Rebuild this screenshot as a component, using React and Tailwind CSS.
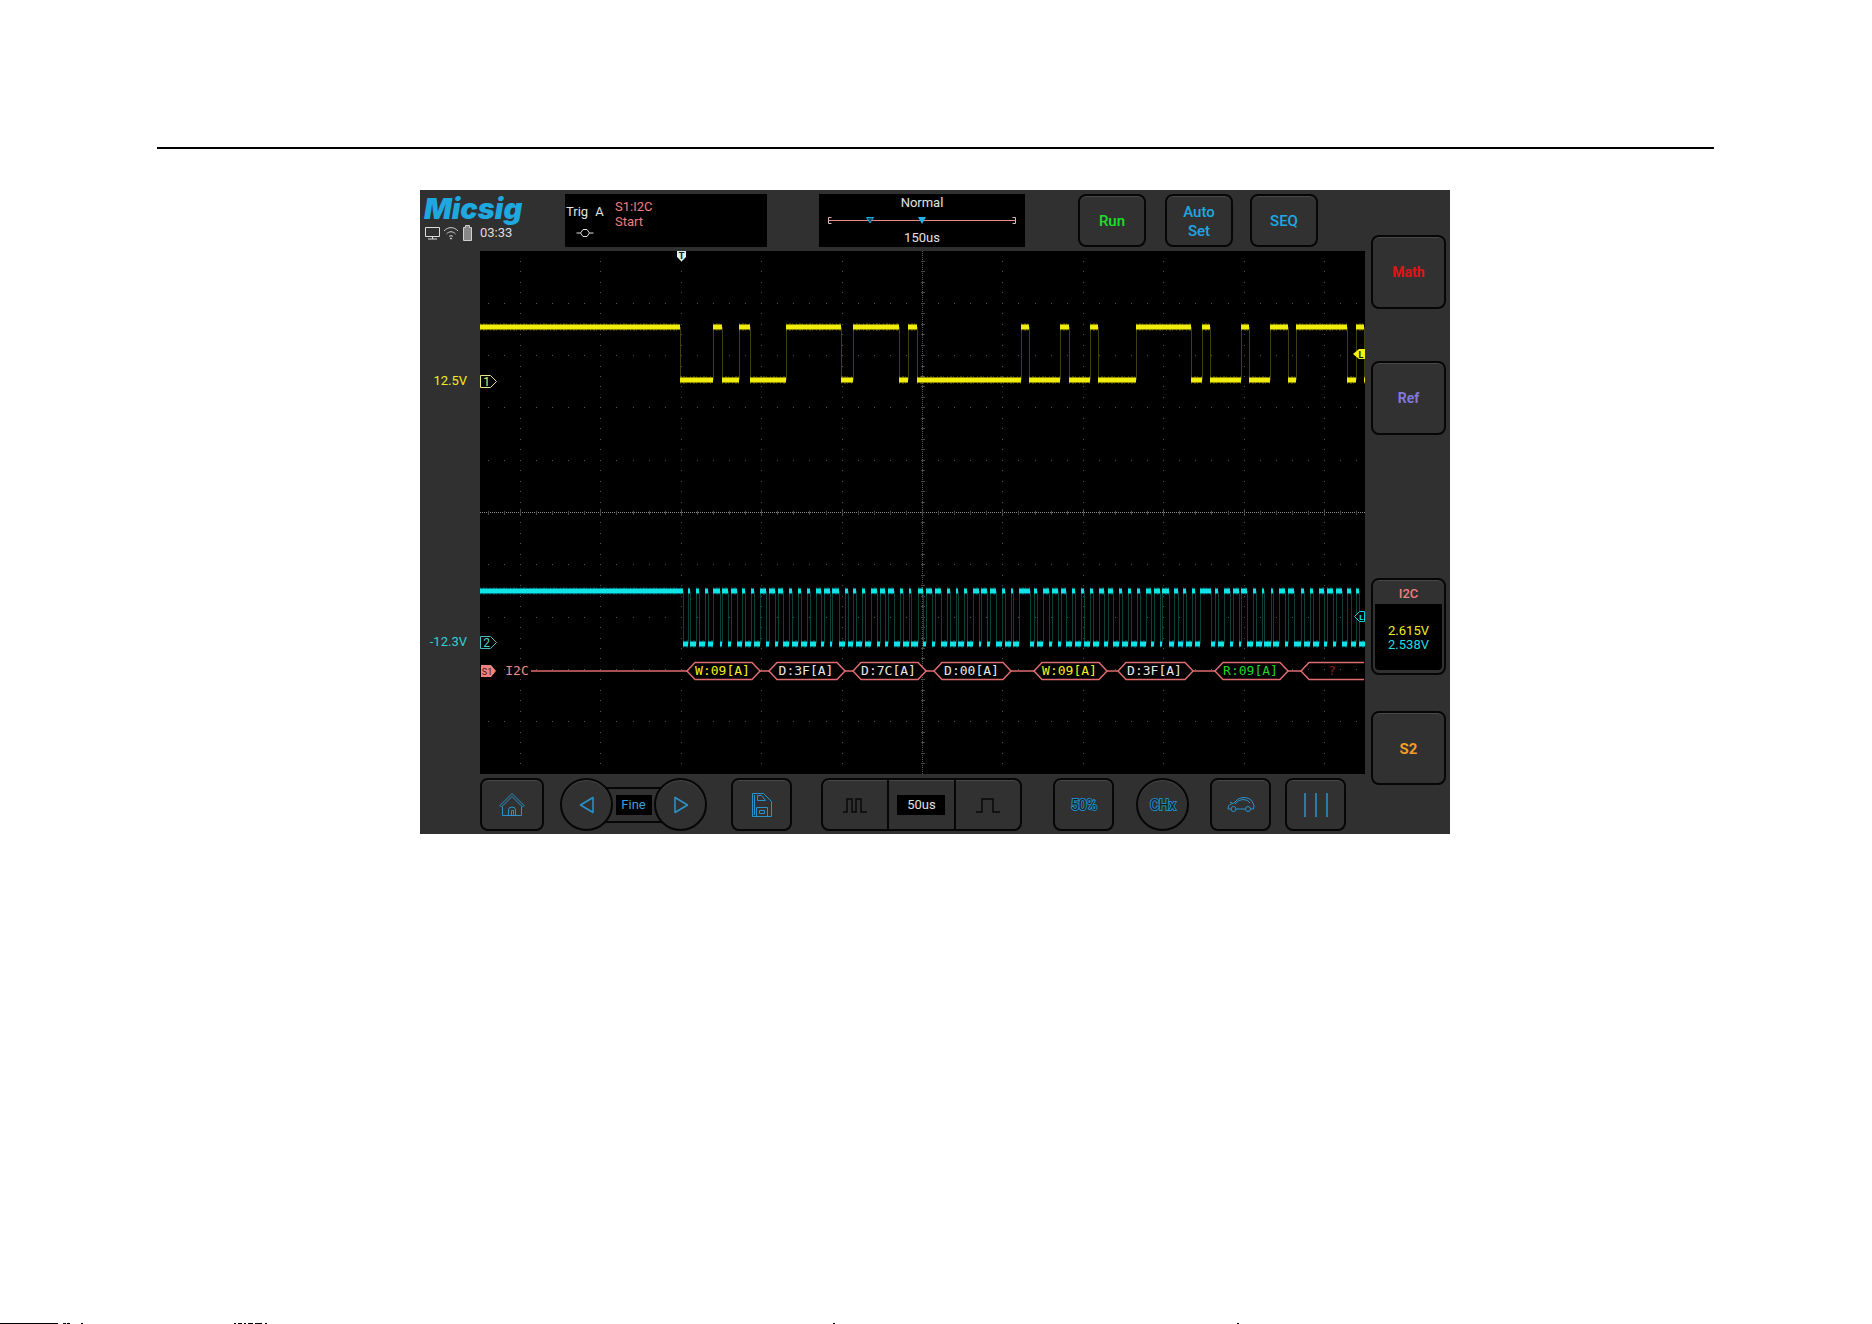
import React from "react";

const CH1_EDGES = [
  200, 233, 242, 259, 270, 306, 361, 373, 419, 428, 437, 541, 549, 580, 589,
  610, 618, 656, 711, 722, 730, 761, 769, 790, 808, 816, 867, 876, 884,
];

const CH2_HIGHS = [
  [208, 210], [216, 219], [225, 228], [233, 240], [242, 248], [251, 257],
  [262, 265], [271, 274], [280, 286], [289, 295], [298, 303], [309, 312],
  [318, 321], [327, 330], [336, 341], [344, 350], [352, 359], [365, 368],
  [373, 376], [382, 385], [391, 397], [400, 405], [408, 414], [420, 423],
  [429, 431], [438, 443], [446, 452], [455, 461], [467, 470], [476, 478],
  [484, 487], [493, 499], [501, 507], [510, 516], [522, 525], [531, 533],
  [539, 550], [554, 557], [563, 569], [572, 578], [581, 586], [592, 595],
  [601, 604], [610, 613], [619, 624], [628, 633], [639, 642], [648, 651],
  [657, 660], [666, 671], [674, 680], [682, 689], [694, 698], [703, 706],
  [712, 715], [720, 731], [735, 738], [744, 750], [753, 759], [761, 767],
  [773, 776], [782, 784], [791, 793], [799, 805], [808, 814], [821, 824],
  [830, 833], [839, 844], [847, 853], [856, 862], [867, 871], [876, 879],
];
const CH2_EDGES = [203, ...CH2_HIGHS.flat()];

const FRAMES = [
  { x1: 207, x2: 280, text: "W:09[A]", color: "#f4f01a" },
  { x1: 289, x2: 365, text: "D:3F[A]", color: "#e8e8e8" },
  { x1: 373, x2: 446, text: "D:7C[A]", color: "#e8e8e8" },
  { x1: 454, x2: 531, text: "D:00[A]", color: "#e8e8e8" },
  { x1: 554, x2: 627, text: "W:09[A]", color: "#f4f01a" },
  { x1: 638, x2: 713, text: "D:3F[A]", color: "#e8e8e8" },
  { x1: 735, x2: 808, text: "R:09[A]", color: "#22d52a" },
];

const DIV_X = 80.4;
const DIV_Y = 52.3;
const MID_X = 442;
const MID_Y = 261;

function Graticule() {
  const dots = [];
  for (let i = -5; i <= 5; i++) {
    if (i === 0) continue;
    for (let j = -24; j <= 24; j++) {
      dots.push([Math.round(MID_X + i * DIV_X), Math.round(MID_Y + (j * DIV_Y) / 5)]);
    }
  }
  for (let j = -4; j <= 4; j++) {
    if (j === 0) continue;
    for (let i = -27; i <= 27; i++) {
      dots.push([Math.round(MID_X + (i * DIV_X) / 5), Math.round(MID_Y + j * DIV_Y)]);
    }
  }
  const ticksX = [];
  for (let i = -27; i <= 27; i++) ticksX.push(Math.round(MID_X + (i * DIV_X) / 5));
  const ticksY = [];
  for (let j = -24; j <= 24; j++) ticksY.push(Math.round(MID_Y + (j * DIV_Y) / 5));
  return (
    <g shapeRendering="crispEdges">
      {dots.map(([x, y], k) => (
        <rect key={k} x={x} y={y} width="1" height="1" fill="#525252" />
      ))}
      <path d="M0 261.5H885" stroke="#8c8c8c" strokeDasharray="1 1" />
      <path d="M442.5 0V523" stroke="#585858" strokeDasharray="1 1" />
      {ticksX.map((x, k) => (
        <rect key={k} x={x} y={k % 5 === 2 ? 258 : 260} width="1" height={k % 5 === 2 ? 7 : 4} fill="#484848" />
      ))}
      {ticksY.map((y, k) => (
        <rect key={k} x="441" y={y} width="4" height="1" fill="#484848" />
      ))}
    </g>
  );
}

function Trace({ edges, high, low, core, glow, edge }) {
  const pts = [0, ...edges, 885];
  let top = "";
  let bottom = "";
  for (let i = 0; i < pts.length - 1; i++) {
    if (i % 2 === 0) top += `M${pts[i]} ${high}H${pts[i + 1]}`;
    else bottom += `M${pts[i]} ${low}H${pts[i + 1]}`;
  }
  const sides = edges.map((x) => `M${x + 0.5} ${high}V${low}`).join("");
  const level = top + bottom;
  return (
    <g fill="none">
      <path d={sides} stroke={edge} strokeWidth="1" />
      <path d={level} stroke={glow} strokeWidth="8" strokeOpacity="0.35" strokeDasharray="1 2 2 1 1 3" />
      <path d={level} stroke={glow} strokeWidth="6" strokeOpacity="0.8" />
      <path d={level} stroke={core} strokeWidth="4" />
    </g>
  );
}

function Display() {
  return (
    <svg viewBox="0 0 885 523" className="block h-auto w-full bg-black" role="img" aria-label="Oscilloscope traces with I2C decode">
      <Graticule />
      <Trace edges={CH1_EDGES} high={76} low={129} core="#f0ec0c" glow="#a8a400" edge="#403e14" />
      <Trace edges={CH2_EDGES} high={340} low={393} core="#10e4e6" glow="#00999c" edge="#0b403c" />

      <path d="M197 0H206V6L201.5 10.5L197 6Z" fill="#d5f3f5" />
      <text x="201.5" y="8" textAnchor="middle" fontSize="9" fontWeight="700" fontFamily="Roboto, sans-serif" fill="#111">T</text>

      <path d="M0.5 124.5H10.5L16.5 130.5L10.5 136.5H0.5Z" fill="#000" stroke="#e6e48a" />
      <text x="6.5" y="135" textAnchor="middle" fontSize="12" fontFamily="Roboto, sans-serif" fill="#f0ee60">1</text>
      <path d="M0.5 385.5H10.5L16.5 391.5L10.5 397.5H0.5Z" fill="#000" stroke="#4fb9bb" />
      <text x="6.5" y="396" textAnchor="middle" fontSize="12" fontFamily="Roboto, sans-serif" fill="#4fd3d5">2</text>

      <path d="M873 103L879 98H885V108H879Z" fill="#f6f20c" />
      <text x="881" y="106.5" textAnchor="middle" fontSize="9" fontWeight="700" fontFamily="Roboto, sans-serif" fill="#111">L</text>
      <path d="M874.5 365.5L879.5 360.5H884.5V370.5H879.5Z" fill="#000" stroke="#10cfd2" />
      <text x="881.5" y="369" textAnchor="middle" fontSize="8" fontWeight="700" fontFamily="Roboto, sans-serif" fill="#10eef0">L</text>

      <path d="M1 414H11L16 420L11 426H1Z" fill="#f28080" />
      <text x="7" y="423.5" textAnchor="middle" fontSize="9" fontFamily="Roboto, sans-serif" fill="#4a1515">S1</text>
      <g fontFamily="'DejaVu Sans Mono', monospace" fontSize="13" textAnchor="middle">
        <text x="37" y="424" fill="#f08a8a">I2C</text>
        <path d="M51 420H207M280 420H289M365 420H373M446 420H454M531 420H554M627 420H638M713 420H735M808 420H821" stroke="#e06c70" strokeWidth="1.5" fill="none" />
        {FRAMES.map(({ x1, x2, text, color }) => (
          <g key={x1}>
            <path
              d={`M${x1} 420L${x1 + 8} 411.5H${x2 - 8}L${x2} 420L${x2 - 8} 428.5H${x1 + 8}Z`}
              fill="#000"
              stroke="#e06c70"
              strokeWidth="1.5"
            />
            <text x={(x1 + x2) / 2 - 1} y="424" fill={color}>{text}</text>
          </g>
        ))}
        <path d="M884 411.5H829L821 420L829 428.5H884" fill="none" stroke="#e06c70" strokeWidth="1.5" />
        <text x="852" y="424" fill="#8e2020">?</text>
      </g>
    </svg>
  );
}

const keyBase =
  "flex shrink-0 items-center justify-center border-2 border-[#060606] bg-[#313131] shadow-[inset_0_1px_0_#484848]";

function Key({ className = "", children, ...rest }) {
  return (
    <button type="button" className={`${keyBase} ${className}`} {...rest}>
      {children}
    </button>
  );
}

function Glyph({ w, h, color = "#2b93cc", children }) {
  return (
    <svg width={w} height={h} viewBox={`0 0 ${w} ${h}`} fill="none" stroke={color} strokeWidth="1" aria-hidden="true">
      {children}
    </svg>
  );
}

function OutlinedWord({ children, size }) {
  return (
    <svg width="32" height="20" viewBox="0 0 32 20" aria-hidden="true">
      <text x="16" y="15" textAnchor="middle" fontFamily="Roboto, sans-serif" fontWeight="400" fontSize={size} fill="#141c22" stroke="#2389c4" strokeWidth="2" paintOrder="stroke">
        {children}
      </text>
    </svg>
  );
}

function TopBar() {
  return (
    <header className="flex h-[61px] items-start pt-1">
      <div className="w-[145px] shrink-0 pl-1">
        <div className="h-[30px] font-[Inter] text-[29px] leading-[30px] font-black text-[#1fa8e0] italic">Micsig</div>
        <div className="flex h-[18px] items-center gap-[3px] pl-px">
          <svg width="15" height="14" viewBox="0 0 15 14" fill="none" stroke="#dcdcdc" aria-hidden="true">
            <path d="M0.5 1.5H14.5V10.5H0.5ZM7.5 10.5V13M3 13H12" />
          </svg>
          <svg width="16" height="14" viewBox="0 0 15 14" fill="none" stroke="#cfcfcf" aria-hidden="true">
            <path d="M0.5 5C4.5 0.5 10.5 0.5 14.5 5M3 8C5.5 5 9.5 5 12 8M5.5 10.500C6.500 9.500 8.500 9.500 9.500 10.500" />
            <circle cx="7.500" cy="12.500" r="0.600" fill="#cfcfcf" />
          </svg>
          <svg width="11" height="16" viewBox="0 0 11 16" aria-hidden="true">
            <path d="M3.500 0.500H7.500V2.500H9.500V15.500H1.500V2.500H3.500Z" fill="#888" stroke="#d0d0d0" />
          </svg>
          <span className="pl-1 text-[13px] leading-4 text-[#dedede]">03:33</span>
        </div>
      </div>

      <div className="flex h-[53px] w-[202px] shrink-0 bg-black pt-[5px] text-[13px] leading-[15px] text-[#e2e2e2]">
        <div className="w-[50px] pt-[5px] pl-px">
          <div className="flex gap-[7px]">
            <span>Trig</span>
            <span>A</span>
          </div>
          <svg className="mt-2 ml-2.5" width="18" height="12" viewBox="0 0 18 12" fill="none" stroke="#e2e2e2" aria-hidden="true">
            <path d="M0.500 6H4.500M13.500 6H17.500M4.500 6L7 2.500H11L13.500 6L11 9.500H7Z" />
          </svg>
        </div>
        <div className="text-[#ee7f80]">
          <div>S1:I2C</div>
          <div>Start</div>
        </div>
      </div>

      <div className="ml-[52px] h-[53px] w-[206px] shrink-0 bg-black text-center text-[13px] leading-[18px] text-[#e2e2e2]">
        <div>Normal</div>
        <svg className="block" width="206" height="17" viewBox="0 0 206 17" fill="none" aria-hidden="true">
          <path d="M10 8.500H196" stroke="#e88c84" />
          <path d="M12.500 5.500H9.500V11.500H12.500M193.500 5.500H196.500V11.500H193.500" stroke="#d6b8b4" />
          <path d="M47.500 5.500H54.500L51 11Z" fill="#14506c" stroke="#1fa8e0" />
          <path d="M99 5H107L103 12Z" fill="#1fb4ee" />
        </svg>
        <div>150us</div>
      </div>

      <Key className="ml-[53px] h-[53px] w-[68px] rounded-lg pt-0.5 text-[15px] font-medium text-[#1be02a]">Run</Key>
      <Key className="ml-[19px] h-[53px] w-[68px] rounded-lg pt-0.5 text-[15px] leading-[19px] font-medium text-[#1fa8e0]">
        <span>Auto<br />Set</span>
      </Key>
      <Key className="ml-[17px] h-[53px] w-[68px] rounded-lg pt-0.5 text-[15px] font-medium text-[#1fa8e0]">SEQ</Key>
    </header>
  );
}

function BottomBar() {
  return (
    <nav className="ml-[60px] flex h-[60px] items-start pt-[4px]">
      <Key className="h-[53px] w-16 rounded-lg" aria-label="Home">
        <Glyph w={26} h={26}>
          <path d="M1 13.500L13 1.500L25 13.500L23.500 15L13 4.500L2.500 15ZM3.500 15V23.500H22.500V15M9.500 23.500V18Q9.500 15 13 15Q16.500 15 16.500 18V23.500M12.500 23.500V18.500H14.500V23.500" />
        </Glyph>
      </Key>

      <div className="ml-4 flex items-center">
        <Key className="z-10 size-[53px] rounded-full" aria-label="Step left">
          <Glyph w={16} h={18}>
            <path strokeWidth="1.500" strokeLinejoin="round" d="M14 1.500V16.500L1.500 9Z" />
          </Glyph>
        </Key>
        <div className="-mx-2 flex h-9 w-[57px] items-center justify-center border-y-2 border-[#060606] bg-[#313131]">
          <button type="button" className="h-5 w-9 bg-black text-[13px] leading-5 text-[#3aa0dc]">Fine</button>
        </div>
        <Key className="z-10 size-[53px] rounded-full" aria-label="Step right">
          <Glyph w={16} h={18}>
            <path strokeWidth="1.500" strokeLinejoin="round" d="M2 1.500V16.500L14.500 9Z" />
          </Glyph>
        </Key>
      </div>

      <Key className="ml-6 h-[53px] w-[61px] rounded-lg" aria-label="Save">
        <Glyph w={22} h={26}>
          <path d="M1.500 1.500H12.500L20.500 9.500V24.500H1.500ZM3.500 3V23M6.500 3.500V8.500H14.500L10.500 3.500ZM5.500 24V15.500H16.500V24M8.500 18.500H13.500V21.500H8.500Z" />
        </Glyph>
      </Key>

      <div className="ml-[29px] flex h-[53px] w-[201px] shrink-0 overflow-hidden rounded-lg border-2 border-[#060606] bg-[#313131] shadow-[inset_0_1px_0_#484848]">
        <button type="button" className="flex flex-1 items-center justify-center" aria-label="Shorter time base">
          <Glyph w={26} h={18} color="#080808">
            <path strokeWidth="1.500" d="M1 16H5V3H10V16H14V3H19V16H25" />
          </Glyph>
        </button>
        <div className="flex flex-1 items-center justify-center border-x-2 border-[#060606]">
          <output className="h-5 w-12 bg-black text-center text-[13px] leading-5 text-[#e2e2e2]">50us</output>
        </div>
        <button type="button" className="flex flex-1 items-center justify-center" aria-label="Longer time base">
          <Glyph w={26} h={18} color="#080808">
            <path strokeWidth="1.500" d="M1 16H7V3H18V16H25" />
          </Glyph>
        </button>
      </div>

      <Key className="ml-[31px] h-[53px] w-[61px] rounded-lg" aria-label="50%">
        <OutlinedWord size="14">50%</OutlinedWord>
      </Key>
      <Key className="ml-[22px] size-[53px] rounded-full" aria-label="CHx">
        <OutlinedWord size="14">CHx</OutlinedWord>
      </Key>
      <Key className="ml-[21px] h-[53px] w-[61px] rounded-lg" aria-label="Automotive">
        <Glyph w={28} h={18}>
          <path d="M4 13H1Q0.500 9 4 8L7 7Q11 1.500 16 1.500Q23 1.500 25.500 6Q28 10 26.500 13H24M9 13H18M8 8Q11 3.500 16 3.500Q21 3.500 23 7M3 6L5 7" />
          <circle cx="6.500" cy="13" r="2.500" />
          <circle cx="21" cy="13" r="2.500" />
        </Glyph>
      </Key>
      <Key className="ml-[14px] h-[53px] w-[61px] rounded-lg" aria-label="More">
        <Glyph w={26} h={26}>
          <path d="M2 1V25M13 1V25M24 1V25" strokeWidth="1.500" />
        </Glyph>
      </Key>
    </nav>
  );
}

function SideKeys() {
  return (
    <aside className="w-[85px] shrink-0 pt-[45px] pl-[6px] text-sm">
      <Key className="h-[74px] w-[75px] rounded-lg font-bold text-[#e01414]">Math</Key>
      <Key className="mt-[52px] h-[74px] w-[75px] rounded-lg font-bold text-[#8078dc]">Ref</Key>
      <button
        type="button"
        className="mt-[143px] flex h-[97px] w-[75px] flex-col rounded-lg border-2 border-[#060606] bg-[#313131] px-0.5 pb-[3px] text-[13px] shadow-[inset_0_1px_0_#484848]"
      >
        <span className="w-full pt-1.5 pb-0.5 leading-4 font-medium text-[#ee7f80]">I2C</span>
        <span className="flex w-full flex-1 flex-col justify-center rounded-b-sm bg-black pt-0.5 leading-[14px]">
          <span className="text-[#f0ec20]">2.615V</span>
          <span className="text-[#20dce0]">2.538V</span>
        </span>
      </button>
      <Key className="mt-[36px] h-[74px] w-[75px] rounded-lg pt-1 text-[15px] font-bold text-[#f59a24]">S2</Key>
    </aside>
  );
}

export default function App() {
  return (
    <main className="flex min-h-screen flex-col bg-white font-[Roboto,sans-serif]">
      <hr className="mr-[158px] ml-[157px] mt-[147px] border-t-2 border-black" />
      <div className="mt-[41px] pr-0.5">
        <section className="mx-auto flex w-full max-w-[1030px] bg-[#303030]">
          <div className="min-w-0 flex-1">
            <TopBar />
            <div className="flex">
              <div className="flex w-[60px] shrink-0 flex-col items-end pt-[122px] pr-[13px] text-[13px] leading-4">
                <span className="text-[#f0ec20]">12.5V</span>
                <span className="mt-[245px] text-[#30d0d4]">-12.3V</span>
              </div>
              <div className="min-w-0 flex-1">
                <Display />
              </div>
            </div>
            <BottomBar />
          </div>
          <SideKeys />
        </section>
      </div>
      <svg className="mt-auto block h-px w-full" shapeRendering="crispEdges" aria-hidden="true">
        <path d="M0 0.500H58M63 0.500H66M67 0.500H70M81 0.500H83M234 0.500H236M238 0.500H242M244 0.500H246M248 0.500H253M255 0.500H262M265 0.500H267M833 0.500H835M1237 0.500H1239" stroke="#000" />
      </svg>
    </main>
  );
}
